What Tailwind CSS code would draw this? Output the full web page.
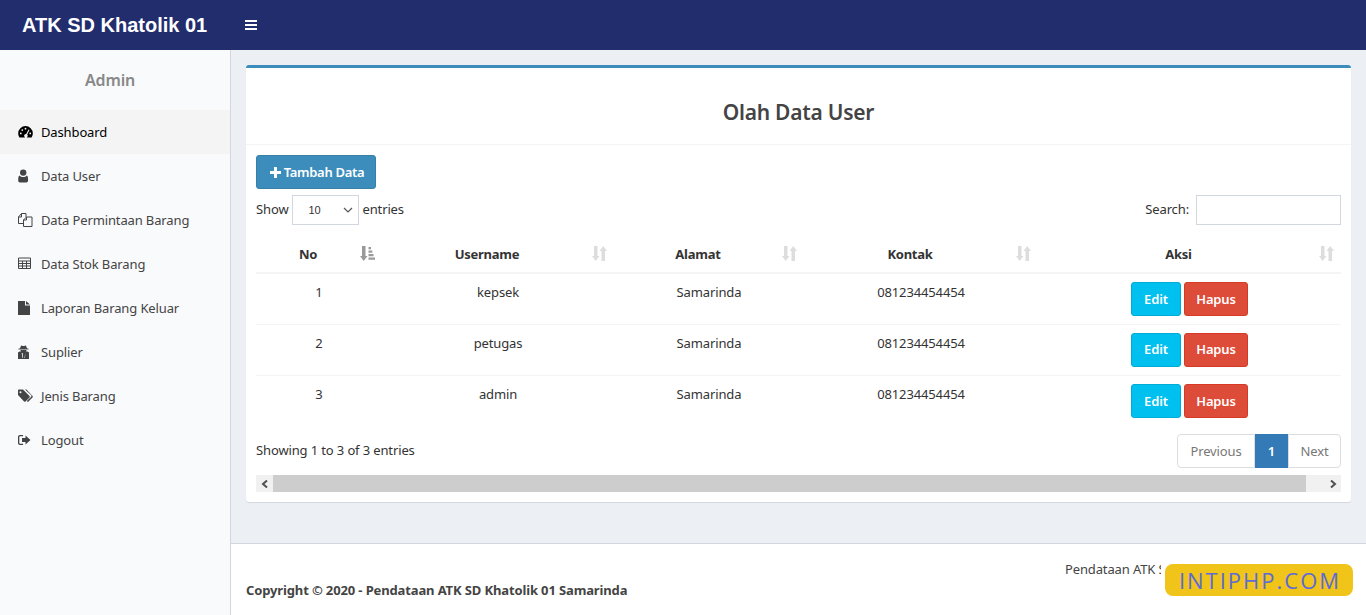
<!DOCTYPE html>
<html><head><meta charset="utf-8"><script src="https://cdn.jsdelivr.net/npm/@tailwindcss/browser@4"></script></head>
<body class="m-0 bg-[#ecf0f5]">
<div class="relative w-[1366px] h-[615px] overflow-hidden flex flex-col font-['Noto_Sans',sans-serif] text-[13px] tracking-[-0.13px] text-[#333] bg-[#ecf0f5]">
  <header class="h-[50px] shrink-0 bg-[#222d6e] flex items-center text-white">
    <div class="w-[230px] pl-[22px] font-['Liberation_Sans',sans-serif] font-bold text-[20px] tracking-normal">ATK SD Khatolik 01</div>
    <button class="ml-[15px] w-[12px] flex flex-col gap-[2px]"><span class="h-[2px] bg-white"></span><span class="h-[2px] bg-white"></span><span class="h-[2px] bg-white"></span></button>
  </header>
  <div class="flex flex-1 min-h-0">
    <aside class="w-[231px] shrink-0 bg-[#f9fafc] border-r border-[#d2d6de]">
      <div class="h-[60px] flex items-center justify-center pr-[10px] text-[16px] font-semibold text-[#888]">Admin</div>
      <nav class="flex flex-col text-[#444]">
        <a class="h-[44px] flex items-center bg-[#f4f4f5] text-black pl-[18px]"><svg class="w-[15px] h-[14px] mr-[8px]" viewBox="0 0 15 14" fill="currentColor"><path fill-rule="evenodd" d="M7.500 1A7.300 7.300 0 0 0 .2 8.300c0 1.700.5 3.100 1.300 4.200h12c.8-1.100 1.300-2.500 1.300-4.200A7.300 7.300 0 0 0 7.500 1ZM2.800 7.500a.9.9 0 1 1 0 1.800.9.9 0 0 1 0-1.800Zm1.500-3.300a.9.900 0 1 1 0 1.800.9.9 0 0 1 0-1.800Zm3.200-1.400a.9.900 0 1 1 0 1.800.9.900 0 0 1 0-1.800Zm4.700 4.700a.9.900 0 1 1 0 1.800.9.900 0 0 1 0-1.800ZM10.600 4.600l.9.400-2.300 4.500a1.800 1.800 0 1 1-1-.5Z"/></svg><span class="pt-[1px]">Dashboard</span></a>
        <a class="h-[44px] flex items-center pl-[18px]"><svg class="w-[15px] h-[14px] mr-[8px]" viewBox="0 0 15 14" fill="currentColor"><circle cx="5.200" cy="3.600" r="3.200"/><path d="M1.500 6.600c1 1 2.300 1.500 3.700 1.500s2.700-.5 3.700-1.500c.8.300 1.200 1.500 1.200 5 0 1.300-.8 2-1.800 2H2c-1 0-1.800-.7-1.800-2 0-3.500.5-4.700 1.300-5Z"/></svg><span class="pt-[1px]">Data User</span></a>
        <a class="h-[44px] flex items-center pl-[18px]"><svg class="w-[15px] h-[14px] mr-[8px]" viewBox="0 0 15 14" fill="none" stroke="currentColor" stroke-width="1"><path d="M.5 4 3.500.5H8V4M.5 4h3V.5M.5 4v6.500h5M5.500 7 8.500 4h5.500v9.500H5.500ZM5.500 7h3V4"/></svg><span class="pt-[1px]">Data Permintaan Barang</span></a>
        <a class="h-[44px] flex items-center pl-[18px]"><svg class="w-[15px] h-[14px] mr-[8px]" viewBox="0 0 15 14" fill="none" stroke="currentColor" stroke-width="1"><path d="M.5 1h12v10.500H.5ZM.5 4h12M.5 6.500h12M.5 9h12M4.500 4v7.500M8.500 4v7.500"/></svg><span class="pt-[1px]">Data Stok Barang</span></a>
        <a class="h-[44px] flex items-center pl-[18px]"><svg class="w-[15px] h-[14px] mr-[8px]" viewBox="0 0 15 14" fill="currentColor"><path d="M0 0H7v4.500h5V14H0ZM8 0l4 3.500H8Z"/></svg><span class="pt-[1px]">Laporan Barang Keluar</span></a>
        <a class="h-[44px] flex items-center pl-[18px]"><svg class="w-[15px] h-[14px] mr-[8px]" viewBox="0 0 15 14" fill="currentColor"><path fill-rule="evenodd" d="M3 .5 5 1h1L8 .5l1 3h1.500v1H.5v-1H2ZM2.500 5h6c0 .6-.2 1-.5 1.500l1.500 0 1.500 1V14H0V7.500L1.500 6.500l1.500 0C2.700 6 2.500 5.600 2.500 5Zm1.200 3L4.500 13H5L4.700 8Zm3.600 0L7 13h-.5l.8-5Z"/></svg><span class="pt-[1px]">Suplier</span></a>
        <a class="h-[44px] flex items-center pl-[18px]"><svg class="w-[15px] h-[14px] mr-[8px]" viewBox="0 0 15 14" fill="currentColor"><path fill-rule="evenodd" d="M0 1.500C0 1 .5.500 1 .500h4l6.500 6.500a1 1 0 0 1 0 1.400L7.500 12.400a1 1 0 0 1-1.400 0L0 6ZM2.500 2.200a1 1 0 1 0 0 2 1 1 0 0 0 0-2Z"/><path d="M7 .5h1.500l6 6.500a1 1 0 0 1 0 1.400l-4 4a1 1 0 0 1-1.400 0l-.3-.3 4.200-4.200a1.500 1.500 0 0 0 0-2Z"/></svg><span class="pt-[1px]">Jenis Barang</span></a>
        <a class="h-[44px] flex items-center pl-[18px]"><svg class="w-[15px] h-[14px] mr-[8px]" viewBox="0 0 15 14" fill="currentColor"><path d="M2 2H5v1.200H2.300c-.6 0-1 .4-1 1v5.600c0 .6.400 1 1 1H5V12H2C.8 12 0 11.100 0 10V4C0 2.900.8 2 2 2Z"/><path d="M7.500 2.500l5 4.500-5 4.500V9H4V5h3.500Z"/></svg><span class="pt-[1px]">Logout</span></a>
      </nav>
    </aside>
    <div class="flex-1 flex flex-col min-w-0">
      <main class="flex-1 pt-[15px] pl-[15px] pr-[15px]">
        <section class="w-[1105px] h-[437px] bg-white rounded-[3px] border-t-[3px] border-[#3c8dbc] shadow-[0_1px_1px_rgba(0,0,0,0.1)]">
          <div class="h-[77px] border-b border-[#f4f4f4] flex items-center justify-center pt-[13px]"><h1 class="text-[21px] tracking-[-0.25px] font-semibold text-[#444]">Olah Data User</h1></div>
          <div class="px-[10px] pt-[10px]">
            <a class="w-[120px] h-[34px] flex items-center justify-center gap-[3px] pl-[2px] rounded-[3px] bg-[#3c8dbc] border border-[#367fa9] text-white font-semibold"><svg class="w-[11px] h-[11px]" viewBox="0 0 11 11" fill="white"><path d="M4 0h3v4h4v3H7v4H4V7H0V4h4Z"/></svg><span class="pt-[1px] tracking-[-0.3px]">Tambah Data</span></a>
            <div class="mt-[6px] h-[30px] flex items-center justify-between">
              <div class="flex items-center gap-[3px]"><span>Show</span>
                <div class="ml-[1px] w-[67px] h-[30px] border border-[#d2d6de] flex items-center justify-between pl-[15px] pr-[5px] font-['Liberation_Sans',sans-serif] text-[11px] tracking-normal">10<svg class="w-[10px] h-[6px]" viewBox="0 0 10 6" fill="none" stroke="#555" stroke-width="1.200"><path d="M1 1l4 4 4-4"/></svg></div>
                <span>entries</span></div>
              <div class="flex items-center gap-[7px]"><span>Search:</span><div class="w-[145px] h-[30px] border border-[#d2d6de]"></div></div>
            </div>
            <table class="mt-[11px] w-[1085px] table-fixed border-collapse">
              <thead>
                <tr class="h-[37px] border-b-2 border-[#f4f4f4] font-bold">
                  <th class="w-[126px] relative pt-[2px] pl-[8px] pr-[30px] text-center font-bold tracking-[-0.25px]">No<svg class="absolute right-[7px] top-[10px] w-[15px] h-[15px]" viewBox="0 0 15 15" fill="#999"><path d="M2 0h3.500v10h2L3.700 15 0 10h2ZM8.500 1h2.500v2.300H8.500ZM8.500 4.500h3.800v2.300H8.500ZM8.500 8h5v2.300h-5ZM8.500 11.500H15v2.300H8.500Z"/></svg></th>
                  <th class="w-[232px] relative pt-[2px] pl-[8px] pr-[30px] text-center font-bold tracking-[-0.25px]">Username<svg class="absolute right-[7px] top-[10px] w-[15px] h-[15px]" viewBox="0 0 15 15" fill="#ddd"><path d="M2 0h3.500v10h2L3.700 15 0 10h2ZM9.500 15H13V5h2L11.200 0 7.500 5h2Z"/></svg></th>
                  <th class="w-[190px] relative pt-[2px] pl-[8px] pr-[30px] text-center font-bold tracking-[-0.25px]">Alamat<svg class="absolute right-[7px] top-[10px] w-[15px] h-[15px]" viewBox="0 0 15 15" fill="#ddd"><path d="M2 0h3.500v10h2L3.700 15 0 10h2ZM9.500 15H13V5h2L11.200 0 7.500 5h2Z"/></svg></th>
                  <th class="w-[234px] relative pt-[2px] pl-[8px] pr-[30px] text-center font-bold tracking-[-0.25px]">Kontak<svg class="absolute right-[7px] top-[10px] w-[15px] h-[15px]" viewBox="0 0 15 15" fill="#ddd"><path d="M2 0h3.500v10h2L3.700 15 0 10h2ZM9.500 15H13V5h2L11.200 0 7.500 5h2Z"/></svg></th>
                  <th class="relative pt-[2px] pl-[8px] pr-[30px] text-center font-bold tracking-[-0.25px]">Aksi<svg class="absolute right-[7px] top-[10px] w-[15px] h-[15px]" viewBox="0 0 15 15" fill="#ddd"><path d="M2 0h3.500v10h2L3.700 15 0 10h2ZM9.500 15H13V5h2L11.200 0 7.500 5h2Z"/></svg></th>
                </tr>
              </thead>
              <tbody class="text-center">
                <tr class="h-[51px] border-b border-[#f4f4f4]">
                  <td class="align-top pt-[9px]">1</td><td class="align-top pt-[9px]">kepsek</td><td class="align-top pt-[9px]">Samarinda</td><td class="align-top pt-[9px]">081234454454</td>
                  <td><div class="flex justify-center gap-[3px] text-white font-semibold"><a class="w-[50px] h-[34px] pt-[1px] flex items-center justify-center rounded-[3px] bg-[#00c0ef] border border-[#00acd6]">Edit</a><a class="w-[64px] h-[34px] pt-[1px] flex items-center justify-center rounded-[3px] bg-[#dd4b39] border border-[#d73925]">Hapus</a></div></td>
                </tr>
                <tr class="h-[51px] border-b border-[#f4f4f4]">
                  <td class="align-top pt-[9px]">2</td><td class="align-top pt-[9px]">petugas</td><td class="align-top pt-[9px]">Samarinda</td><td class="align-top pt-[9px]">081234454454</td>
                  <td><div class="flex justify-center gap-[3px] text-white font-semibold"><a class="w-[50px] h-[34px] pt-[1px] flex items-center justify-center rounded-[3px] bg-[#00c0ef] border border-[#00acd6]">Edit</a><a class="w-[64px] h-[34px] pt-[1px] flex items-center justify-center rounded-[3px] bg-[#dd4b39] border border-[#d73925]">Hapus</a></div></td>
                </tr>
                <tr class="h-[51px]">
                  <td class="align-top pt-[9px]">3</td><td class="align-top pt-[9px]">admin</td><td class="align-top pt-[9px]">Samarinda</td><td class="align-top pt-[9px]">081234454454</td>
                  <td><div class="flex justify-center gap-[3px] text-white font-semibold"><a class="w-[50px] h-[34px] pt-[1px] flex items-center justify-center rounded-[3px] bg-[#00c0ef] border border-[#00acd6]">Edit</a><a class="w-[64px] h-[34px] pt-[1px] flex items-center justify-center rounded-[3px] bg-[#dd4b39] border border-[#d73925]">Hapus</a></div></td>
                </tr>
              </tbody>
            </table>
            <div class="mt-[8px] h-[34px] flex items-center justify-between">
              <span>Showing 1 to 3 of 3 entries</span>
              <div class="flex h-[34px] text-[#777]">
                <a class="w-[78px] pt-[1px] flex items-center justify-center border border-[#ddd] rounded-l-[4px]">Previous</a>
                <a class="w-[33px] pt-[1px] flex items-center justify-center bg-[#337ab7] text-white font-semibold">1</a>
                <a class="w-[53px] pt-[1px] flex items-center justify-center border border-[#ddd] rounded-r-[4px]">Next</a>
              </div>
            </div>
            <div class="mt-[7px] h-[17px] flex bg-[#f1f1f1]">
              <div class="w-[17px] flex items-center justify-center"><svg class="w-[8px] h-[8px]" viewBox="0 0 8 8" fill="none" stroke="#505050" stroke-width="2"><path d="M6 .5 2 4l4 3.500"/></svg></div>
              <div class="w-[1033px] bg-[#cdcdcd]"></div>
              <div class="flex-1 flex items-center justify-end pr-[4px]"><svg class="w-[8px] h-[8px]" viewBox="0 0 8 8" fill="none" stroke="#505050" stroke-width="2"><path d="M2 .5 6 4 2 7.500"/></svg></div>
            </div>
          </div>
        </section>
      </main>
      <footer class="h-[72px] shrink-0 bg-white border-t border-[#d2d6de] px-[15px] flex flex-col">
        <div class="pt-[16px] pl-[819px]"><span class="block w-[96px] overflow-hidden text-[#444] whitespace-nowrap">Pendataan ATK S</span></div>
        <div class="pt-[1.500px] font-bold text-[#444]">Copyright © 2020 - Pendataan ATK SD Khatolik 01 Samarinda</div>
      </footer>
    </div>
  </div>
  <div class="absolute left-[1165px] top-[564px] w-[188px] h-[32px] pl-[2px] rounded-[8px] bg-[#f0c419] flex items-center justify-center font-['Open_Sans',sans-serif] text-[22px] tracking-[2px] text-[#5b6bd8]">INTIPHP.COM</div>
</div>
</body></html>
